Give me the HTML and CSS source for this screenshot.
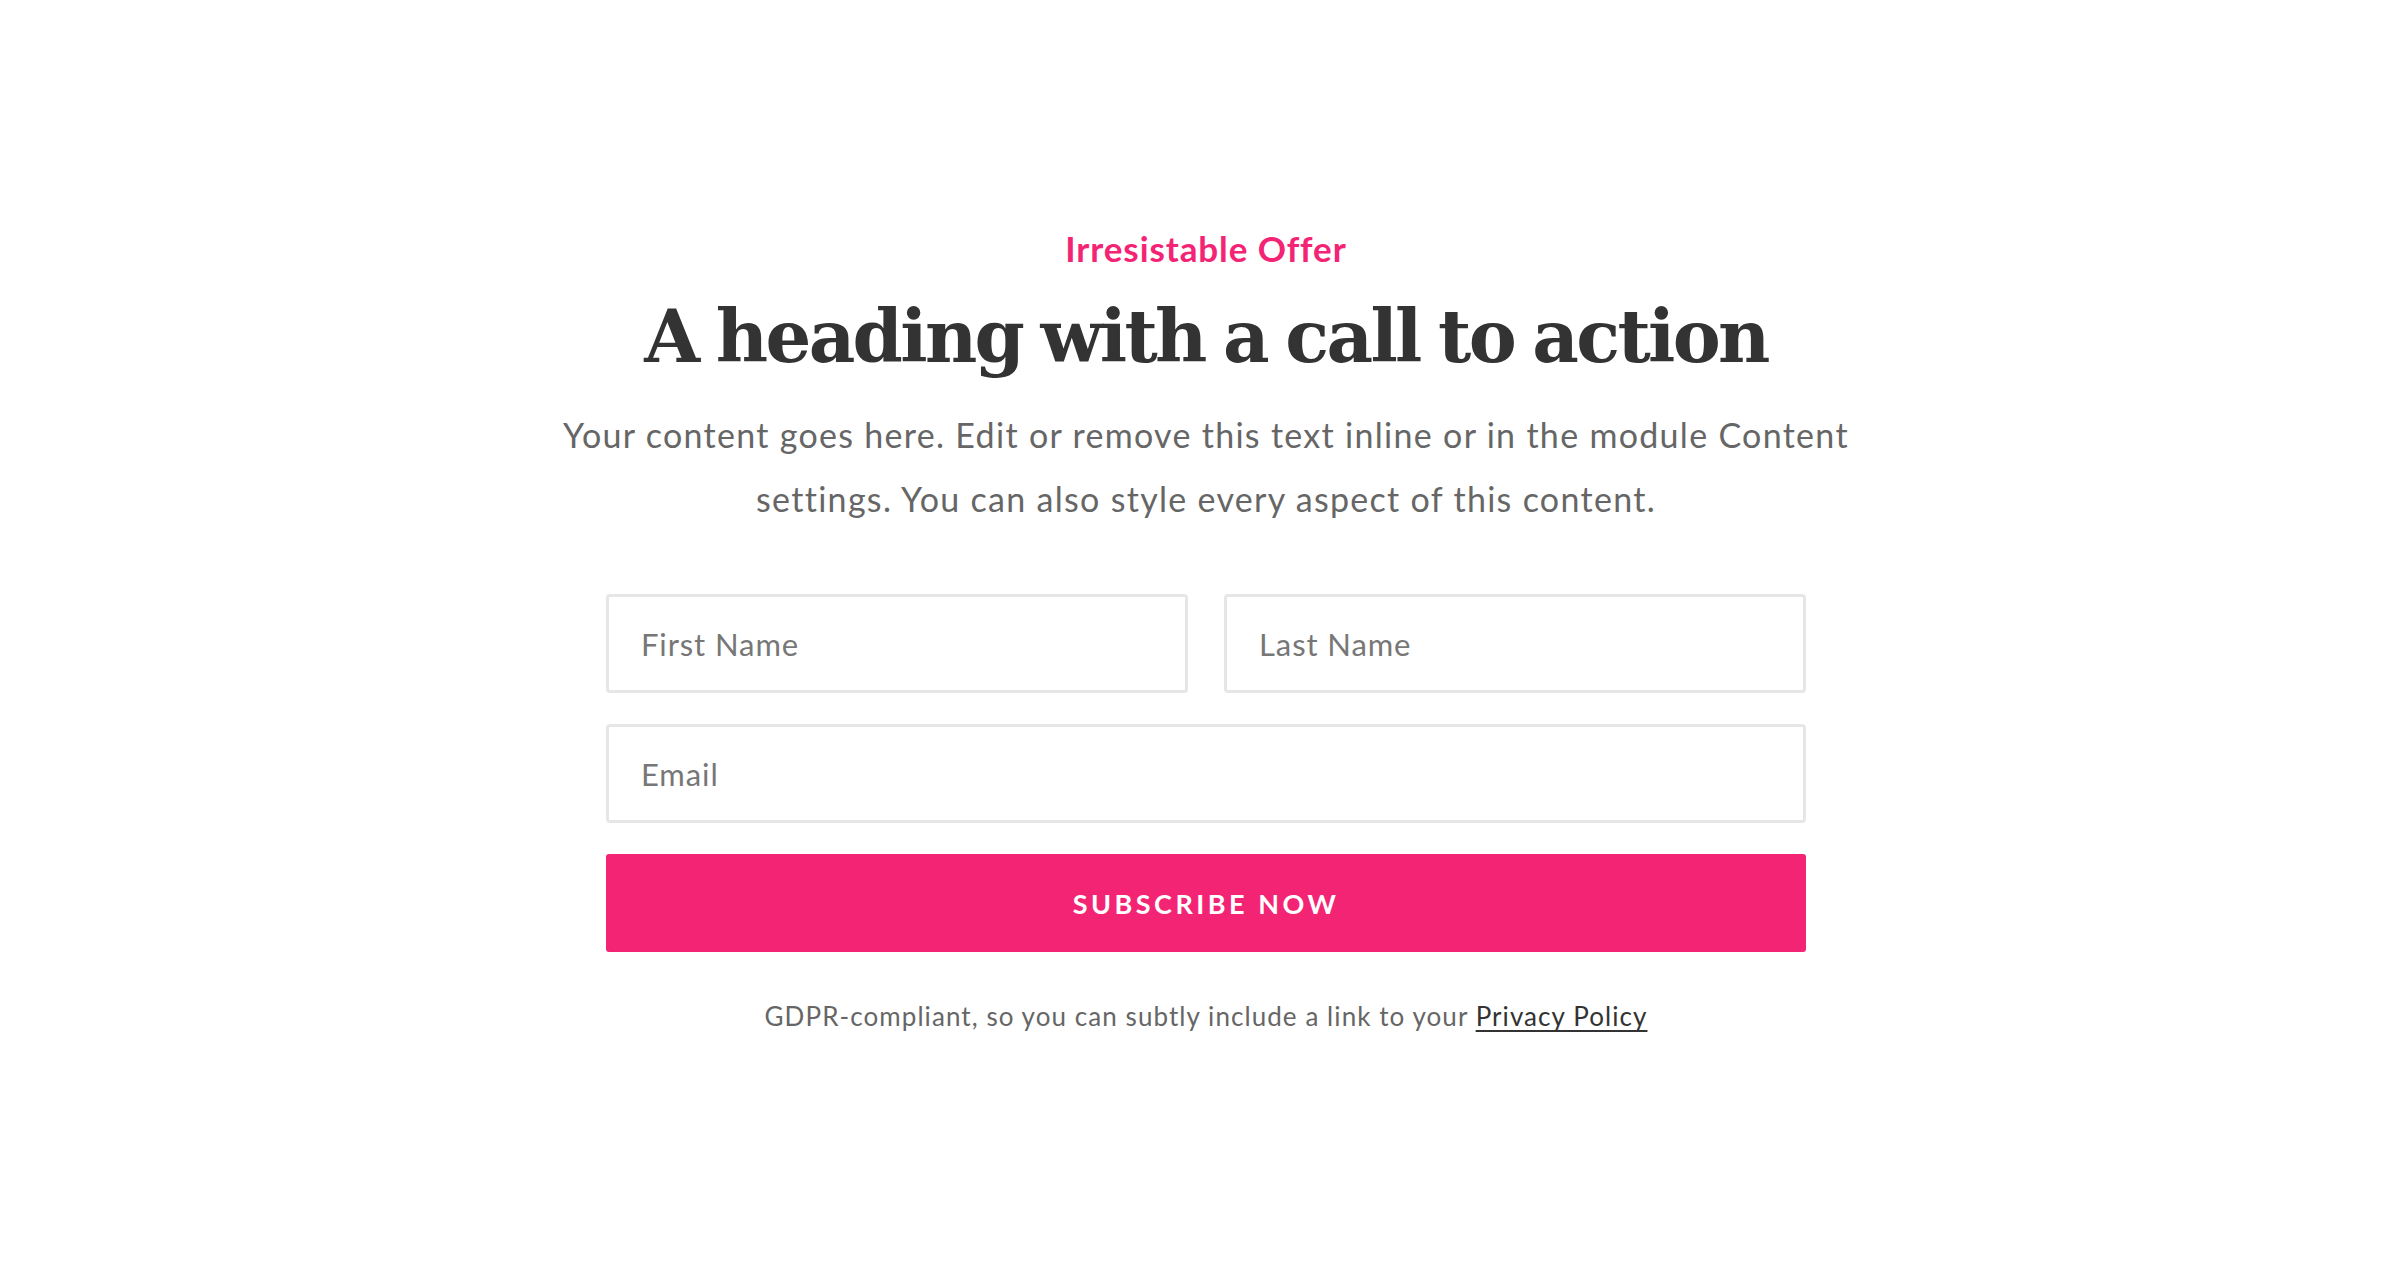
FILE: index.html
```html
<!DOCTYPE html>
<html lang="en">
<head>
<meta charset="utf-8">
<title>Irresistable Offer</title>
<link rel="stylesheet" href="styles.css">
</head>
<body>
<section class="cta">
  <div class="eyebrow">Irresistable Offer</div>
  <h1 class="heading">A heading with a call to action</h1>
  <p class="lead">Your content goes here. Edit or remove this text inline or in the module Content settings. You can also style every aspect of this content.</p>
  <form class="form" onsubmit="return false">
    <div class="row two">
      <input class="field" type="text" placeholder="First Name">
      <input class="field" type="text" placeholder="Last Name">
    </div>
    <div class="row">
      <input class="field" type="email" placeholder="Email">
    </div>
    <button class="submit" type="submit">Subscribe Now</button>
  </form>
  <p class="note">GDPR-compliant, so you can subtly include a link to your <a href="#" class="link">Privacy Policy</a></p>
</section>
</body>
</html>
```

FILE: styles.css
```css
html, body {
  margin: 0;
  padding: 0;
  background: #ffffff;
}

body {
  font-family: "Lato", "Liberation Sans", sans-serif;
  color: #666666;
}

.cta {
  display: flex;
  flex-direction: column;
  align-items: center;
  padding: 228px 0 0 12px;
}

.eyebrow {
  font-size: 35px;
  line-height: 40px;
  font-weight: 700;
  letter-spacing: 0.9px;
  color: #f42475;
}

.heading {
  margin: 19px 0 0;
  font-family: "DejaVu Serif", serif;
  font-weight: 700;
  font-size: 72px;
  line-height: 100px;
  color: #333333;
  letter-spacing: -2.7px;
  word-spacing: -4px;
}

.lead {
  margin: 16px 0 0;
  max-width: 1340px;
  text-align: center;
  font-size: 34px;
  line-height: 64px;
  letter-spacing: 1.3px;
  color: #666666;
}

.form {
  width: 1200px;
  margin-top: 63px;
  display: flex;
  flex-direction: column;
  gap: 31px;
}

.row {
  display: grid;
  grid-template-columns: 1fr;
}

.row.two {
  grid-template-columns: 1fr 1fr;
  column-gap: 36px;
}

.field {
  box-sizing: border-box;
  height: 99px;
  width: 100%;
  border: 3px solid #e6e6e6;
  border-radius: 4px;
  padding: 0 32px;
  font-family: inherit;
  font-size: 31px;
  letter-spacing: 0.9px;
  color: #555555;
  background: #ffffff;
  outline: none;
}

.field::placeholder {
  color: #777777;
}

.submit {
  height: 98px;
  border: 0;
  border-radius: 3px;
  background: #f42475;
  color: #ffffff;
  font-family: inherit;
  font-weight: 700;
  font-size: 27px;
  letter-spacing: 3.5px;
  text-transform: uppercase;
  cursor: pointer;
}

.note {
  margin: 44px 0 0;
  font-size: 26px;
  line-height: 40px;
  letter-spacing: 1.07px;
  color: #666666;
  text-align: center;
}

.link {
  color: #333333;
  text-decoration: underline;
  text-underline-offset: 4px;
}
```
